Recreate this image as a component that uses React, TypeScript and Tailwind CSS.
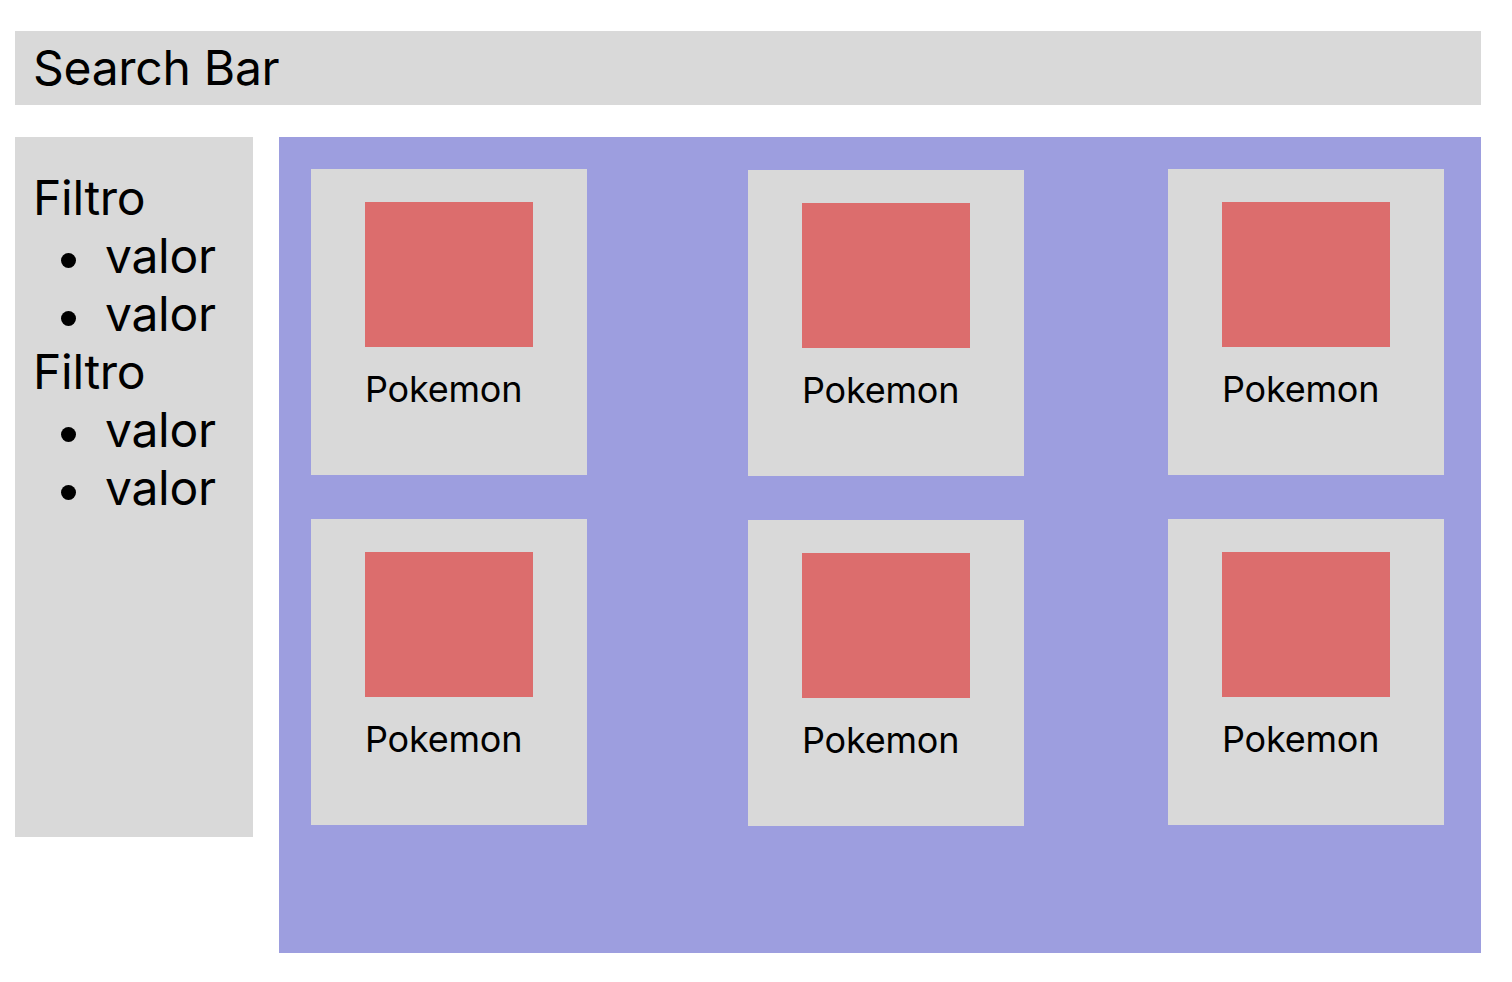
import React from 'react'

const filters = [
	{ name: 'Filtro', values: ['valor', 'valor'] },
	{ name: 'Filtro', values: ['valor', 'valor'] },
]

function Card({ className = '' }: { className?: string }) {
	return (
		<div className={`flex h-[306px] w-[276px] shrink-0 flex-col items-center bg-[#d9d9d9] pt-[33px] ${className}`}>
			<div className="w-[168px]">
				<div className="h-[145px] w-[168px] bg-[#dc6d6d]" />
				<p className="mt-[21px] text-[36px] leading-[1.21] tracking-[-0.006em] text-black">Pokemon</p>
			</div>
		</div>
	)
}

function Row() {
	return (
		<div className="flex items-start">
			<Card />
			<Card className="ml-[161px] mt-px" />
			<Card className="ml-[144px]" />
		</div>
	)
}

export default function App() {
	return (
		<div className="min-h-screen bg-white px-[15px] pt-[31px] font-['Inter','Liberation_Sans',sans-serif] text-black">
			<div className="h-[74px] w-[1466px] bg-[#d9d9d9] pl-[18px] pt-2">
				<p className="text-[48px] leading-[1.21] tracking-[-0.006em]">Search Bar</p>
			</div>

			<div className="mt-8 flex items-start">
				<aside className="h-[700px] w-[238px] shrink-0 bg-[#d9d9d9] pl-[18px] pt-8 text-[48px] leading-[1.21] tracking-[-0.006em]">
					{filters.map((f, i) => (
						<div key={i}>
							<p>{f.name}</p>
							<ul>
								{f.values.map((v, j) => (
									<li key={j} className="flex items-start pl-[28px]">
										<span className="mt-[26px] h-[15px] w-[15px] shrink-0 rounded-full bg-black" />
										<span className="ml-[29px]">{v}</span>
									</li>
								))}
							</ul>
						</div>
					))}
				</aside>

				<main className="ml-[26px] flex h-[816px] w-[1202px] flex-col gap-[43px] bg-[#9d9edf] pl-8 pt-8">
					<Row />
					<Row />
				</main>
			</div>
		</div>
	)
}
